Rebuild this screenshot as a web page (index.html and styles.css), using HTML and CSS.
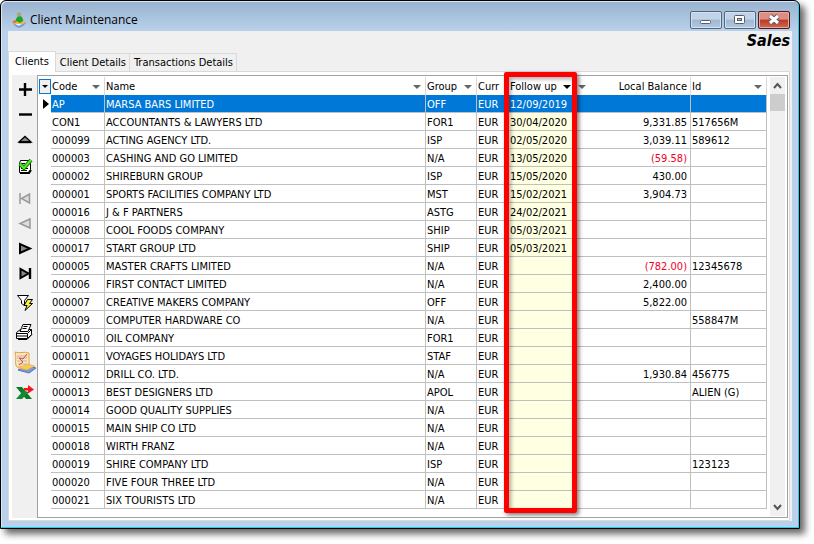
FILE: index.html
```
<!DOCTYPE html>
<html lang="en">
<head>
<meta charset="utf-8">
<title>Client Maintenance</title>
<link rel="stylesheet" href="styles.css">
</head>
<body>
<main class="window">
  <header class="titlebar">
    <svg class="app-icon" viewBox="0 0 16 16" aria-hidden="true">
      <path d="M2 11l2-3h8l3 3-3 3-4 2-4-2z" fill="#7f95cc"/>
      <path d="M1 10l4-2h6l4 2-3 2-4 1-4-1z" fill="#f2b94a"/>
      <path d="M1 10l3-2 2 1-2 2z" fill="#e06a32"/>
      <path d="M4 12h7l-3 2z" fill="#e4ecf8"/>
      <path d="M5 9V7l2-3h3l2 3v2l-3 2z" fill="#1fa52e"/>
      <circle cx="8" cy="2.500" r="2.200" fill="#a9a67c"/>
    </svg>
    <h1 class="title">Client Maintenance</h1>
    <div class="caption-buttons">
      <button class="caption" aria-label="Minimize"><svg viewBox="0 0 30 16"><rect x="9.500" y="8.500" width="10" height="3" rx="1" fill="#fff" stroke="#555e6b"/></svg></button>
      <button class="caption" aria-label="Maximize"><svg viewBox="0 0 30 16"><rect x="9.500" y="3.500" width="10" height="8" rx="1" fill="#fff" stroke="#555e6b"/><rect x="12.500" y="6.500" width="4" height="2" fill="#a9bfd8" stroke="#555e6b"/></svg></button>
      <button class="caption close" aria-label="Close"><svg viewBox="0 0 30 16"><path d="M11 4l8 7M19 4l-8 7" stroke="#555e6b" stroke-width="5"/><path d="M11 4l8 7M19 4l-8 7" stroke="#fff" stroke-width="3"/></svg></button>
    </div>
  </header>
  <div class="client">
    <div class="module">Sales</div>
    <nav class="tabs">
      <button class="tab active">Clients</button>
      <button class="tab">Client Details</button>
      <button class="tab">Transactions Details</button>
    </nav>
    <section class="page">
      <div class="toolbar">
        <button class="tool" aria-label="Add"><svg viewBox="0 0 24 24"><path d="M13 6v13M7 12.500h13" stroke="#000" stroke-width="2.400"/></svg></button>
        <button class="tool" aria-label="Remove"><svg viewBox="0 0 24 24"><path d="M7 12.500h13" stroke="#000" stroke-width="2.400"/></svg></button>
        <button class="tool" aria-label="Edit"><svg viewBox="0 0 24 24"><path d="M8 15l5-5 5 5z" fill="#888"/><path d="M7 15l6-5.500 6 5.500z" fill="none" stroke="#000" stroke-width="1.400"/><path d="M7 15.200h12" stroke="#000" stroke-width="2"/></svg></button>
        <button class="tool post" aria-label="Post"><svg viewBox="0 0 24 24"><path d="M8.500 6.500h10v9l-2 3h-9v-9z" fill="#fff" stroke="#000"/><path d="M8 19h9l2-3" fill="none" stroke="#000" stroke-width="2"/><path d="M9 9.500h4M9 11.500h3M9 14.500h7M9 16.500h6" stroke="#000"/><path d="M8 10l4 4 7-8" fill="none" stroke="#187a12" stroke-width="4"/><path d="M8 10l4 4 7-8" fill="none" stroke="#4cf01a" stroke-width="2"/></svg></button>
        <button class="tool" aria-label="First" disabled><svg viewBox="0 0 24 24"><path d="M8 7v11M17.500 8v9l-8-4.500z" fill="#ddd" stroke="#999" stroke-width="1.500"/></svg></button>
        <button class="tool" aria-label="Previous" disabled><svg viewBox="0 0 24 24"><path d="M18 8v9l-10-4.500z" fill="#ddd" stroke="#999" stroke-width="1.500"/></svg></button>
        <button class="tool" aria-label="Next"><svg viewBox="0 0 24 24"><path d="M8 8v9l10-4.500z" fill="#888" stroke="#000" stroke-width="2"/></svg></button>
        <button class="tool" aria-label="Last"><svg viewBox="0 0 24 24"><path d="M8.500 8v9l8-4.500z" fill="#888" stroke="#000" stroke-width="2"/><path d="M18 7v11" stroke="#000" stroke-width="2.400"/></svg></button>
        <button class="tool group" aria-label="Filter"><svg viewBox="0 0 24 24"><path d="M5.500 5.500h11l-4 5v5l-3-2v-3z" fill="#fff" stroke="#000"/><path d="M15.500 9.500h5l-3 4h3l-7.500 7 2-5h-3z" fill="#ffed38" stroke="#000"/></svg></button>
        <button class="tool group" aria-label="Print"><svg viewBox="0 0 24 24"><path d="M4.500 12.500l4-3h11v5l-4 4h-11z" fill="#fff" stroke="#000"/><path d="M8 11.500l3-7h8l-3 7z" fill="#fff" stroke="#000"/><path d="M11.500 6.500h4M10.500 8.500h4M4.500 13.500h11l4-4M15.500 14v4M5 16h10M6 19.500h9l5-5" fill="none" stroke="#000"/></svg></button>
        <button class="tool group" aria-label="Report"><svg viewBox="0 0 24 24"><path d="M3 2c5 2 9-1 14 1v14H5C2 13 5 9 3 2z" fill="#ffe8b0" stroke="#e2a245"/><path d="M5 6h10M5 8h10M5 11h10M6 14h9" stroke="#b9aee0"/><path d="M15 4l-4 5-4-1 4 4-4 3" fill="none" stroke="#e64b26"/><path d="M6 20l9-4 9 2-7 5z" fill="#7d99d9" stroke="#5275b8"/><path d="M6 18l9-4 8 2-8 4z" fill="#f8c957" stroke="#dba544" stroke-width=".5"/></svg></button>
        <button class="tool group" aria-label="Export"><svg viewBox="0 0 24 24"><path d="M4 7h6l10 12h-6z" fill="#0d7a28"/><path d="M4 19l7-8 6 1-7 7z" fill="#15883a"/><path d="M12 8h4V5l6 4.500-6 4v-3h-4z" fill="#f5141d"/></svg></button>
      </div>
      <div class="grid-frame">
        <table class="grid">
          <colgroup><col class="c-mark"><col class="c-code"><col class="c-name"><col class="c-group"><col class="c-curr"><col class="c-follow"><col class="c-balance"><col class="c-id"></colgroup>
          <thead><tr>
            <th><button class="column-menu" aria-label="Columns"></button></th>
            <th class="sortable">Code</th><th class="sortable">Name</th><th class="sortable">Group</th><th>Curr</th><th class="sortable sorted">Follow up</th><th class="balance-head">Local Balance</th><th class="sortable">Id</th>
          </tr></thead>
          <tbody id="rows"></tbody>
        </table>
        <div class="scrollbar" aria-hidden="true">
          <svg class="arrow" viewBox="0 0 15 17"><path d="M4 11l3.500-4 3.500 4" fill="none" stroke="#555" stroke-width="2"/></svg>
          <span class="thumb"></span>
          <svg class="arrow" viewBox="0 0 15 17"><path d="M4 6l3.500 4 3.500-4" fill="none" stroke="#555" stroke-width="2"/></svg>
        </div>
        <div class="highlight"></div>
      </div>
    </section>
  </div>
</main>
<script src="rows.js"></script>
</body>
</html>
```
FILE: styles.css
```
* { box-sizing: border-box; }
body {
  margin: 0;
  padding: 0 14px 14px 0;
  background: #fff;
  color: #000;
  font: 11px/18px "DejaVu Sans Condensed", "DejaVu Sans", sans-serif;
}
button { font: inherit; color: inherit; border: 0; padding: 0; background: none; }
svg { display: block; }
.window {
  border: 1px solid #000;
  border-radius: 6px 6px 0 0;
  background: linear-gradient(#98b2cf, #b9d1ea 30px);
  box-shadow: inset -1px -1px #1fd0ee, inset 1px 1px #d8e8f6, 5px 5px 7px #0009;
  padding: 0 7px 7px;
}
.titlebar { display: flex; align-items: center; height: 30px; padding: 8px 2px 0 3px; }
.app-icon { width: 16px; height: 16px; }
.title { flex: 1; margin: 0 0 0 3px; font: 12px/18px "Open Sans", "Noto Sans", sans-serif; }
.caption-buttons { display: flex; gap: 2px; }
.caption {
  width: 32px;
  height: 18px;
  border: 1px solid #52667d;
  border-radius: 2px;
  background: linear-gradient(#c0d3e7 45%, #9fb7d1 50%, #b0c8e2);
  box-shadow: inset 0 0 0 1px #d3e2f1;
}
.caption svg { width: 30px; height: 16px; }
.close { border-color: #4d1920; background: linear-gradient(#dd8e80 45%, #b93a29 50%, #cf6b4d); box-shadow: inset 0 0 0 1px #e9aa9f; }
.client { background: #f0f0f0; }
.module { padding-right: 2px; text-align: right; font: italic bold 16px/20px "DejaVu Sans Condensed", sans-serif; }
.tabs { display: flex; align-items: flex-end; height: 20px; }
.tab { height: 18px; padding: 0 3px 0 4px; border: 1px solid #d9d9d9; border-left: 0; border-bottom: 0; line-height: 18px; }
.tab.active { height: 21px; margin-bottom: -1px; background: #fff; border-left: 1px solid #d9d9d9; padding: 0 6px; position: relative; }
.page { display: flex; margin-right: 2px; padding: 3px 1px 2px 3px; border: 1px solid #d9d9d9; background: #fff; }
.toolbar { width: 25px; padding-top: 1px; background: #f0f0f0; }
.tool { display: block; height: 25px; width: 25px; }
.tool svg { width: 24px; height: 24px; }
.post { height: 34px; padding-bottom: 4px; }
.group { height: 30px; padding-top: 4px; }
.grid-frame { position: relative; flex: 1; display: flex; align-items: stretch; border: 1px solid #a0a0a0; padding: 1px; }
.grid { flex: 1; width: 0; margin: 0 3px 7px 0; border-collapse: separate; border-spacing: 0; table-layout: fixed; }
.c-mark { width: 12px; }
.c-code { width: 54px; }
.c-group { width: 51px; }
.c-curr { width: 31px; }
.c-follow { width: 68px; }
.c-balance { width: 115px; }
.c-id { width: 76px; }
th, td { height: 18px; padding: 0 3px 0 1px; text-align: left; font-weight: normal; white-space: nowrap; line-height: 17px; border-right: 1px solid #c0c0c0; }
th { border-color: #d9d9d9; }
td { padding-top: 2px; line-height: 15px; border-bottom: 1px solid #c0c0c0; }
th:first-child, td:first-child { padding: 0; border: 0; }
.sortable::after { content: ""; float: right; margin: 7px 1px 0; border: 4px solid transparent; border-top-color: #666; border-bottom: 0; }
.sorted { border-color: transparent; }
.sorted::after { border-top-color: #000; }
.balance-head, .num { text-align: right; }
.balance-head::before { content: ""; float: left; margin: 7px 0 0 1px; border: 4px solid transparent; border-top-color: #666; border-bottom: 0; }
.column-menu { display: block; width: 12px; height: 15px; border: 1px solid #0078d7; background: #f0f0f0; }
.column-menu::after { content: ""; display: block; margin: 1px 2px 0; border: 3px solid transparent; border-top-color: #000; border-bottom: 0; }
.follow, .sorted { padding-left: 2px; }
.follow { background: #ffffe1; }
.negative { color: #f0001e; }
.selected td:not(:first-child) { background: #0078d7; color: #fff; }
.selected td:first-child::before { content: ""; display: block; margin-left: 4px; width: 0; border: 5px solid transparent; border-left: 6px solid #000; border-right: 0; }
.scrollbar { display: flex; flex-direction: column; width: 15px; margin-right: 1px; background: #f0f0f0; }
.arrow { height: 17px; width: 15px; }
.arrow:last-child { margin-top: auto; }
.thumb { height: 17px; background: #cdcdcd; }
.highlight { position: absolute; top: -4px; bottom: 4px; right: 210px; width: 73px; border: 5px solid #f00; border-radius: 2px; box-shadow: 2px 2px 4px #0008, inset 2px 2px 4px #0005; }
```
FILE: rows.js
```
const clients = [
  ["AP", "MARSA BARS LIMITED", "OFF", "12/09/2019", "", ""],
  ["CON1", "ACCOUNTANTS & LAWYERS LTD", "FOR1", "30/04/2020", "9,331.85", "517656M"],
  ["000099", "ACTING AGENCY LTD.", "ISP", "02/05/2020", "3,039.11", "589612"],
  ["000003", "CASHING AND GO LIMITED", "N/A", "13/05/2020", "(59.58)", ""],
  ["000002", "SHIREBURN GROUP", "ISP", "15/05/2020", "430.00", ""],
  ["000001", "SPORTS FACILITIES COMPANY LTD", "MST", "15/02/2021", "3,904.73", ""],
  ["000016", "J & F PARTNERS", "ASTG", "24/02/2021", "", ""],
  ["000008", "COOL FOODS COMPANY", "SHIP", "05/03/2021", "", ""],
  ["000017", "START GROUP LTD", "SHIP", "05/03/2021", "", ""],
  ["000005", "MASTER CRAFTS LIMITED", "N/A", "", "(782.00)", "12345678"],
  ["000006", "FIRST CONTACT LIMITED", "N/A", "", "2,400.00", ""],
  ["000007", "CREATIVE MAKERS COMPANY", "OFF", "", "5,822.00", ""],
  ["000009", "COMPUTER HARDWARE CO", "N/A", "", "", "558847M"],
  ["000010", "OIL COMPANY", "FOR1", "", "", ""],
  ["000011", "VOYAGES HOLIDAYS LTD", "STAF", "", "", ""],
  ["000012", "DRILL CO. LTD.", "N/A", "", "1,930.84", "456775"],
  ["000013", "BEST DESIGNERS LTD", "APOL", "", "", "ALIEN (G)"],
  ["000014", "GOOD QUALITY SUPPLIES", "N/A", "", "", ""],
  ["000015", "MAIN SHIP CO LTD", "N/A", "", "", ""],
  ["000018", "WIRTH FRANZ", "N/A", "", "", ""],
  ["000019", "SHIRE COMPANY LTD", "ISP", "", "", "123123"],
  ["000020", "FIVE FOUR THREE LTD", "N/A", "", "", ""],
  ["000021", "SIX TOURISTS LTD", "N/A", "", "", ""]
];
const body = document.getElementById("rows");
clients.forEach(([code, name, group, follow, balance, id], index) => {
  const row = body.insertRow();
  if (index === 0) row.className = "selected";
  ["", code, name, group, "EUR", follow, balance, id].forEach((text, column) => {
    const cell = row.insertCell();
    cell.textContent = text;
    if (column === 5) cell.className = "follow";
    if (column === 6) cell.className = text.startsWith("(") ? "num negative" : "num";
  });
});
```
